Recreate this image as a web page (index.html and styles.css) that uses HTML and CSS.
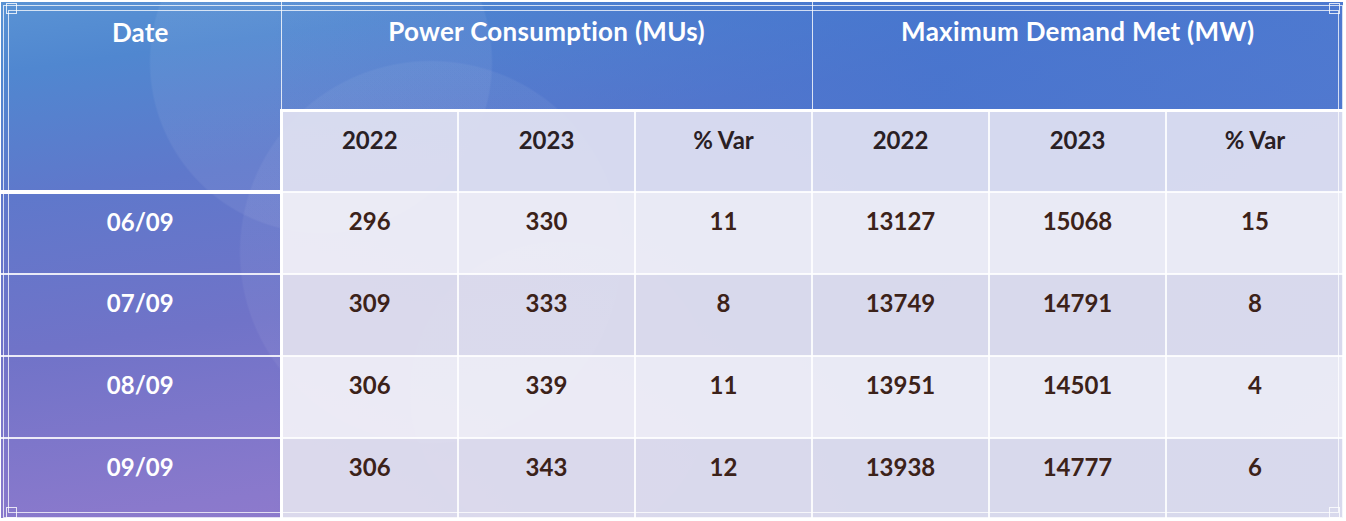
FILE: index.html
```html
<!DOCTYPE html>
<html lang="en">
<head>
<meta charset="utf-8">
<title>Power Consumption and Maximum Demand Met</title>
<link rel="stylesheet" href="styles.css">
</head>
<body>
<div class="board">
  <table class="grid">
    <colgroup>
      <col class="c-date">
      <col class="c-num"><col class="c-num"><col class="c-num">
      <col class="c-num"><col class="c-num"><col class="c-num">
    </colgroup>
    <thead>
      <tr class="h1">
        <th class="date-h" rowspan="2">Date</th>
        <th class="grp" colspan="3">Power Consumption (MUs)</th>
        <th class="grp" colspan="3">Maximum Demand Met (MW)</th>
      </tr>
      <tr class="h2">
        <th class="first">2022</th><th>2023</th><th>% Var</th>
        <th>2022</th><th>2023</th><th>% Var</th>
      </tr>
    </thead>
    <tbody>
      <tr class="odd">
        <th class="date">06/09</th>
        <td class="first">296</td><td>330</td><td>11</td>
        <td>13127</td><td>15068</td><td>15</td>
      </tr>
      <tr class="even">
        <th class="date">07/09</th>
        <td class="first">309</td><td>333</td><td>8</td>
        <td>13749</td><td>14791</td><td>8</td>
      </tr>
      <tr class="odd">
        <th class="date">08/09</th>
        <td class="first">306</td><td>339</td><td>11</td>
        <td>13951</td><td>14501</td><td>4</td>
      </tr>
      <tr class="even last">
        <th class="date">09/09</th>
        <td class="first">306</td><td>343</td><td>12</td>
        <td>13938</td><td>14777</td><td>6</td>
      </tr>
    </tbody>
  </table>
  <div class="frame frame-outer"></div>
  <div class="frame frame-inner"></div>
  <span class="corner tl"></span>
  <span class="corner tr"></span>
  <span class="corner bl"></span>
  <span class="corner br"></span>
</div>
</body>
</html>
```
FILE: styles.css
```css
html, body {
  margin: 0;
  padding: 0;
  background: #ffffff;
}

body {
  font-family: Lato, "Open Sans", "Liberation Sans", sans-serif;
}

.board {
  position: relative;
  width: 1342px;
  height: 516px;
  margin: 2px 0 0 1px;
  background:
    radial-gradient(circle at 320px 60px, rgba(255,255,255,0.06) 0 170px, rgba(255,255,255,0) 172px),
    radial-gradient(circle at 430px 250px, rgba(255,255,255,0.05) 0 190px, rgba(255,255,255,0) 192px),
    radial-gradient(circle at 560px 390px, rgba(255,255,255,0.04) 0 150px, rgba(255,255,255,0) 152px),
    linear-gradient(90deg, rgba(70,120,210,0) 20%, rgba(66,116,207,0.75) 70%, rgba(70,122,210,0.7) 100%),
    linear-gradient(172deg, #5a93d4 0%, #5087d0 10%, #5f78cb 28%, #7073c8 50%, #8a79cc 75%, #9c7dcb 100%);
}

.grid {
  width: 100%;
  height: 100%;
  table-layout: fixed;
  border-collapse: collapse;
  border: hidden;
  font-weight: 700;
  font-size: 24px;
  line-height: 1.2;
  text-align: center;
}

.c-date { width: 280px; }
.c-num { width: 177px; }

th, td {
  padding: 14px 0 0;
  vertical-align: top;
  font-weight: 700;
  border: 2px solid rgba(255,255,255,0.85);
}

.h1 { height: 108px; }
.h1 th {
  color: #ffffff;
  font-size: 26px;
  letter-spacing: 0.3px;
  border-width: 1px;
  border-color: rgba(255,255,255,0.8);
  border-bottom: 3px solid #ffffff;
}

.h1 .date-h {
  border-right-width: 1px;
  border-bottom: 4px solid #ffffff;
  font-size: 26px;
  letter-spacing: 0.2px;
  padding-top: 15px;
}

.h2 { height: 82px; }
.h2 th {
  color: #2a2024;
  background: rgba(224,225,241,0.93);
}
.h2 th.first { border-left: 3px solid #ffffff; }

tbody tr { height: 82px; }
tbody tr.last { height: 80px; }

.date {
  color: #ffffff;
  background: transparent;
  border-right: 3px solid #ffffff;
}

td {
  color: #3c2219;
}

.odd td { background: rgba(241,240,247,0.95); }
.even td { background: rgba(224,223,238,0.94); }

.frame {
  position: absolute;
  pointer-events: none;
  border: 1.5px solid rgba(255,255,255,0.75);
}
.frame-outer { top: 3px; left: 2px; right: 0; bottom: 0; }
.frame-inner { top: 8px; left: 7px; right: 4px; bottom: 5px; }

.corner {
  position: absolute;
  width: 9px;
  height: 9px;
  border: 1.5px solid rgba(255,255,255,0.8);
}
.corner.tl { top: 1px; left: 5px; }
.corner.tr { top: 1px; right: 3px; }
.corner.bl { bottom: 0; left: 5px; }
.corner.br { bottom: 0; right: 3px; }
```
